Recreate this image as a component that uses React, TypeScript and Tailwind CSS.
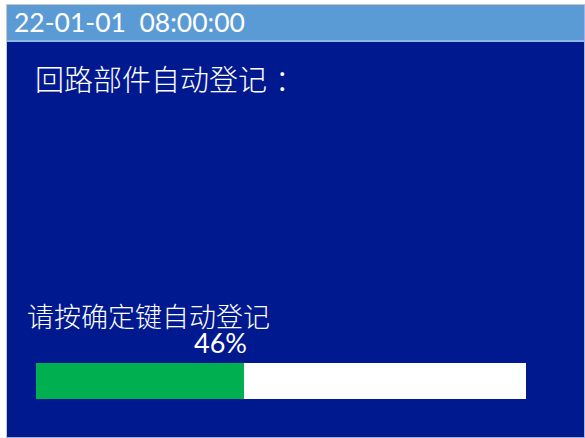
import React from "react";

export default function App() {
  const pct = 46;
  return (
    <div className="w-[585px] h-[438px] bg-white pt-[4px] pl-[6px] overflow-hidden">
      <div className="w-[579px] h-[434px] flex flex-col border-t border-l border-[#c8c8c8] border-r border-r-[#9fb3e8] border-b border-b-[#9fb3e8] bg-[#00198f]">
        <div className="h-[37px] shrink-0 bg-[#5b9bd5] border-b-2 border-[#8cb8e4] flex items-center pl-[7px]">
          <span
            className="text-white text-[26.5px] leading-none whitespace-pre"
            style={{ fontFamily: "Lato, 'Open Sans', sans-serif" }}
          >
            22-01-01  08:00:00
          </span>
        </div>
        <div
          className="flex-1 flex flex-col text-white"
          style={{ fontFamily: "'Noto Sans CJK SC', sans-serif" }}
        >
          <div className="mt-[20px] ml-[28px] text-[29px] leading-[32px] font-light">
            回路部件自动登记<span className="ml-[8px]">：</span>
          </div>
          <div className="mt-[208px] ml-[20px] text-[27px] leading-[28px] font-light">
            请按确定键自动登记
          </div>
          <div
            className="ml-[187px] text-[27px] leading-[26px]"
            style={{ fontFamily: "Lato, 'Open Sans', sans-serif" }}
          >
            {pct}%
          </div>
          <div className="ml-[29px] mt-[7px] w-[490px] h-[36px] bg-white flex">
            <div className="h-full bg-[#00b050]" style={{ width: `${(208 / 490) * 100}%` }} />
          </div>
        </div>
      </div>
    </div>
  );
}
